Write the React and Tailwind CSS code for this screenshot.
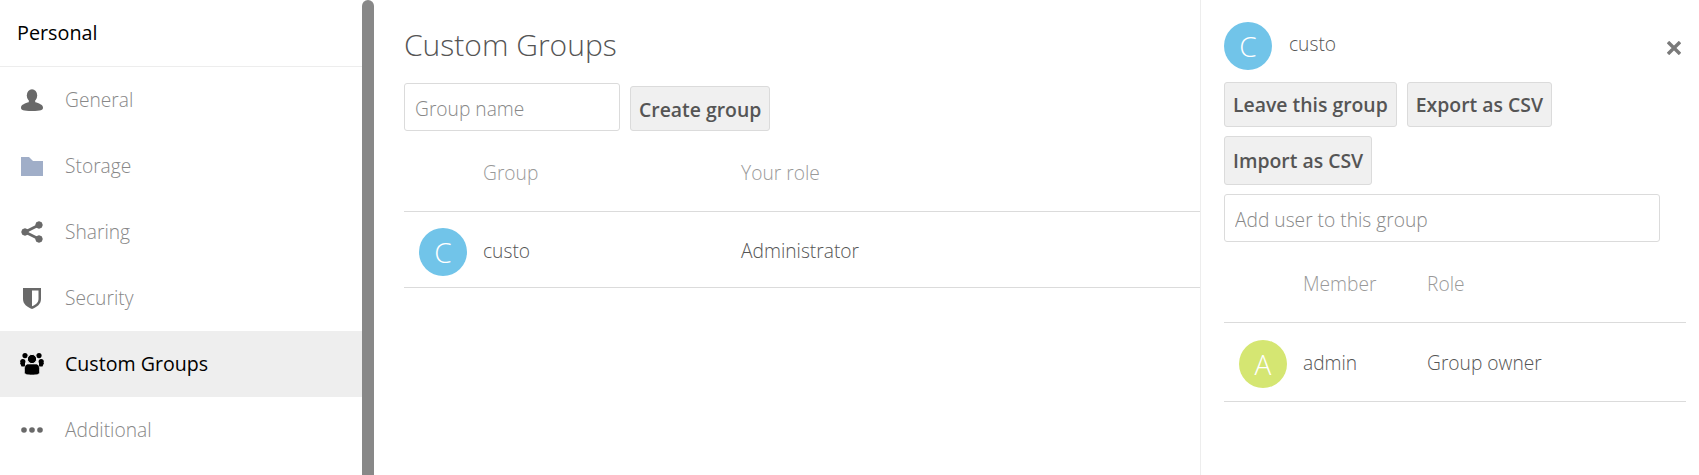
const UserIcon = () => (
  <svg width="22" height="22" viewBox="0 0 22 22" fill="#696969">
    <ellipse cx="11" cy="6.5" rx="5.2" ry="6.300" />
    <path d="M8 11h6l.3 2.200c3.200.9 7.700 2.400 7.700 5.300 0 2.600-2 3.500-11 3.500s-11-.9-11-3.500c0-2.900 4.500-4.400 7.700-5.300z" />
  </svg>
);

const FolderIcon = () => (
  <svg width="22" height="19" viewBox="0 0 22 19" fill="#a0aec8">
    <path d="M0 0h8l4 4h10v15H0z" />
  </svg>
);

const ShareIcon = () => (
  <svg width="22" height="22" viewBox="0 0 22 22" fill="#696969" stroke="#696969">
    <circle cx="4" cy="11" r="3.200" />
    <circle cx="18" cy="4" r="3.200" />
    <circle cx="18" cy="18" r="3.200" />
    <path d="M4 11 18 4M4 11l14 7" strokeWidth="2.600" />
  </svg>
);

const ShieldIcon = () => (
  <svg width="18" height="21" viewBox="0 0 18 21">
    <path d="M0 0h18v11c0 5-4 8-9 10-5-2-9-5-9-10z" fill="#696969" />
    <path d="M9 2.500h6.500V11c0 3.500-3 5.800-6.500 7.300z" fill="#fff" />
  </svg>
);

const GroupIcon = () => (
  <svg width="24" height="22" viewBox="0 0 24 22" fill="#000">
    <circle cx="5" cy="2.600" r="2.600" />
    <circle cx="19" cy="2.600" r="2.600" />
    <circle cx="2.800" cy="8.500" r="2.600" />
    <circle cx="21.200" cy="8.500" r="2.600" />
    <path d="M0 10h5v3.500H1.500z" />
    <path d="M24 10h-5v3.500h3.500z" />
    <circle cx="12" cy="6" r="4.600" stroke="#eee" strokeWidth="1" />
    <path d="M7.500 11h9c2 .8 3 2 3 4.500v4c0 1.800-2.500 2.500-7.500 2.500s-7.500-.7-7.500-2.500v-4c0-2.500 1-3.700 3-4.500z" stroke="#eee" strokeWidth="0.600" />
  </svg>
);

const DotsIcon = () => (
  <svg width="22" height="6" viewBox="0 0 22 6" fill="#696969">
    <circle cx="3" cy="3" r="2.800" />
    <circle cx="11" cy="3" r="2.800" />
    <circle cx="19" cy="3" r="2.800" />
  </svg>
);

const CloseIcon = () => (
  <svg width="14" height="14" viewBox="0 0 14 14" stroke="#7a7a7a" strokeWidth="3.400">
    <path d="M1 1l12 12M13 1 1 13" />
  </svg>
);

const navItems = [
  { label: 'General', icon: <UserIcon /> },
  { label: 'Storage', icon: <FolderIcon /> },
  { label: 'Sharing', icon: <ShareIcon /> },
  { label: 'Security', icon: <ShieldIcon /> },
  { label: 'Custom Groups', icon: <GroupIcon />, active: true },
  { label: 'Additional', icon: <DotsIcon /> },
];

const Avatar = ({ letter, color }) => (
  <div className={`w-12 h-12 rounded-full flex items-center justify-center text-white text-[28px] font-light shrink-0 ${color}`}>
    {letter}
  </div>
);

const Button = ({ children, className }) => (
  <button className={`bg-[#f0f0f0] border border-[#dbdbdb] rounded-[3px] px-2 text-[19.4px] font-semibold text-[#555] whitespace-nowrap ${className}`}>
    {children}
  </button>
);

export default function App() {
  return (
    <div className="flex h-[475px] w-[1699px] overflow-hidden bg-white font-['Open_Sans',sans-serif] font-light text-[19.2px]">
      {/* SIDEBAR */}
      <div className="w-[362px] shrink-0">
        <div className="h-[67px] flex items-center pl-[17px] border-b border-[#ededed] text-[19.8px] font-normal text-black">
          Personal
        </div>
        {navItems.map((item) => (
          <div
            key={item.label}
            className={`h-[66px] flex items-center ${item.active ? 'bg-[#eeeeee] text-black font-normal text-[19.6px]' : 'text-[#888]'}`}
          >
            <div className="w-[65px] pl-[20px] pr-[21px] flex justify-center shrink-0">{item.icon}</div>
            {item.label}
          </div>
        ))}
      </div>

      {/* SCROLLBAR */}
      <div className="w-3 shrink-0 bg-[#888] rounded-t-[6px]" />

      {/* MAIN */}
      <div className="flex-1 pl-[30px] min-w-0">
        <h2 className="text-[30px] font-light text-[#555] leading-[38px] mt-[26px]">Custom Groups</h2>
        <div className="flex items-end gap-[10px] mt-[19px]">
          <input
            placeholder="Group name"
            className="w-[216px] h-[48px] border border-[#dbdbdb] rounded-[3px] px-[10px] pt-[2px] placeholder:text-[#888] outline-none"
          />
          <Button className="h-[45px] pt-[2px]">Create group</Button>
        </div>
        <div className="flex items-center h-[81px] pt-[5px] border-b border-[#dbdbdb] text-[#999]">
          <div className="w-[79px] shrink-0" />
          <div className="w-[258px] shrink-0">Group</div>
          <div>Your role</div>
        </div>
        <div className="flex items-start h-[76px] pt-[16px] border-b border-[#dbdbdb] text-[#555]">
          <div className="w-[79px] shrink-0 pl-[15px]">
            <Avatar letter="C" color="bg-[#71c4e9]" />
          </div>
          <div className="w-[258px] shrink-0 leading-[45px]">custo</div>
          <div className="leading-[45px]">Administrator</div>
        </div>
      </div>

      {/* DETAILS PANEL */}
      <div className="w-[499px] shrink-0 border-l border-[#ededed] pl-[23px] pr-[13px]">
        <div className="flex items-start pt-[22px] relative">
          <Avatar letter="C" color="bg-[#71c4e9]" />
          <div className="ml-[17px] mt-[9px] leading-[26px] text-[#555]">custo</div>
          <div className="absolute right-[5px] top-[41px]">
            <CloseIcon />
          </div>
        </div>
        <div className="flex flex-wrap gap-x-[10px] mt-[12px] w-[436px]">
          <Button className="h-[45px]">Leave this group</Button>
          <Button className="h-[45px]">Export as CSV</Button>
          <Button className="h-[49px] mt-[9px]">Import as CSV</Button>
        </div>
        <input
          placeholder="Add user to this group"
          className="block w-[436px] h-[48px] mt-[9px] border border-[#dbdbdb] rounded-[3px] px-[10px] pt-[2px] placeholder:text-[#888] outline-none"
        />
        <div className="flex items-center h-[81px] pt-[5px] border-b border-[#dbdbdb] text-[#999]">
          <div className="w-[79px] shrink-0" />
          <div className="w-[124px] shrink-0">Member</div>
          <div>Role</div>
        </div>
        <div className="flex items-start h-[79px] pt-[17px] border-b border-[#dbdbdb] text-[#555]">
          <div className="w-[79px] shrink-0 pl-[15px]">
            <Avatar letter="A" color="bg-[#d5e672]" />
          </div>
          <div className="w-[124px] shrink-0 leading-[45px]">admin</div>
          <div className="leading-[45px]">Group owner</div>
        </div>
      </div>
    </div>
  );
}
